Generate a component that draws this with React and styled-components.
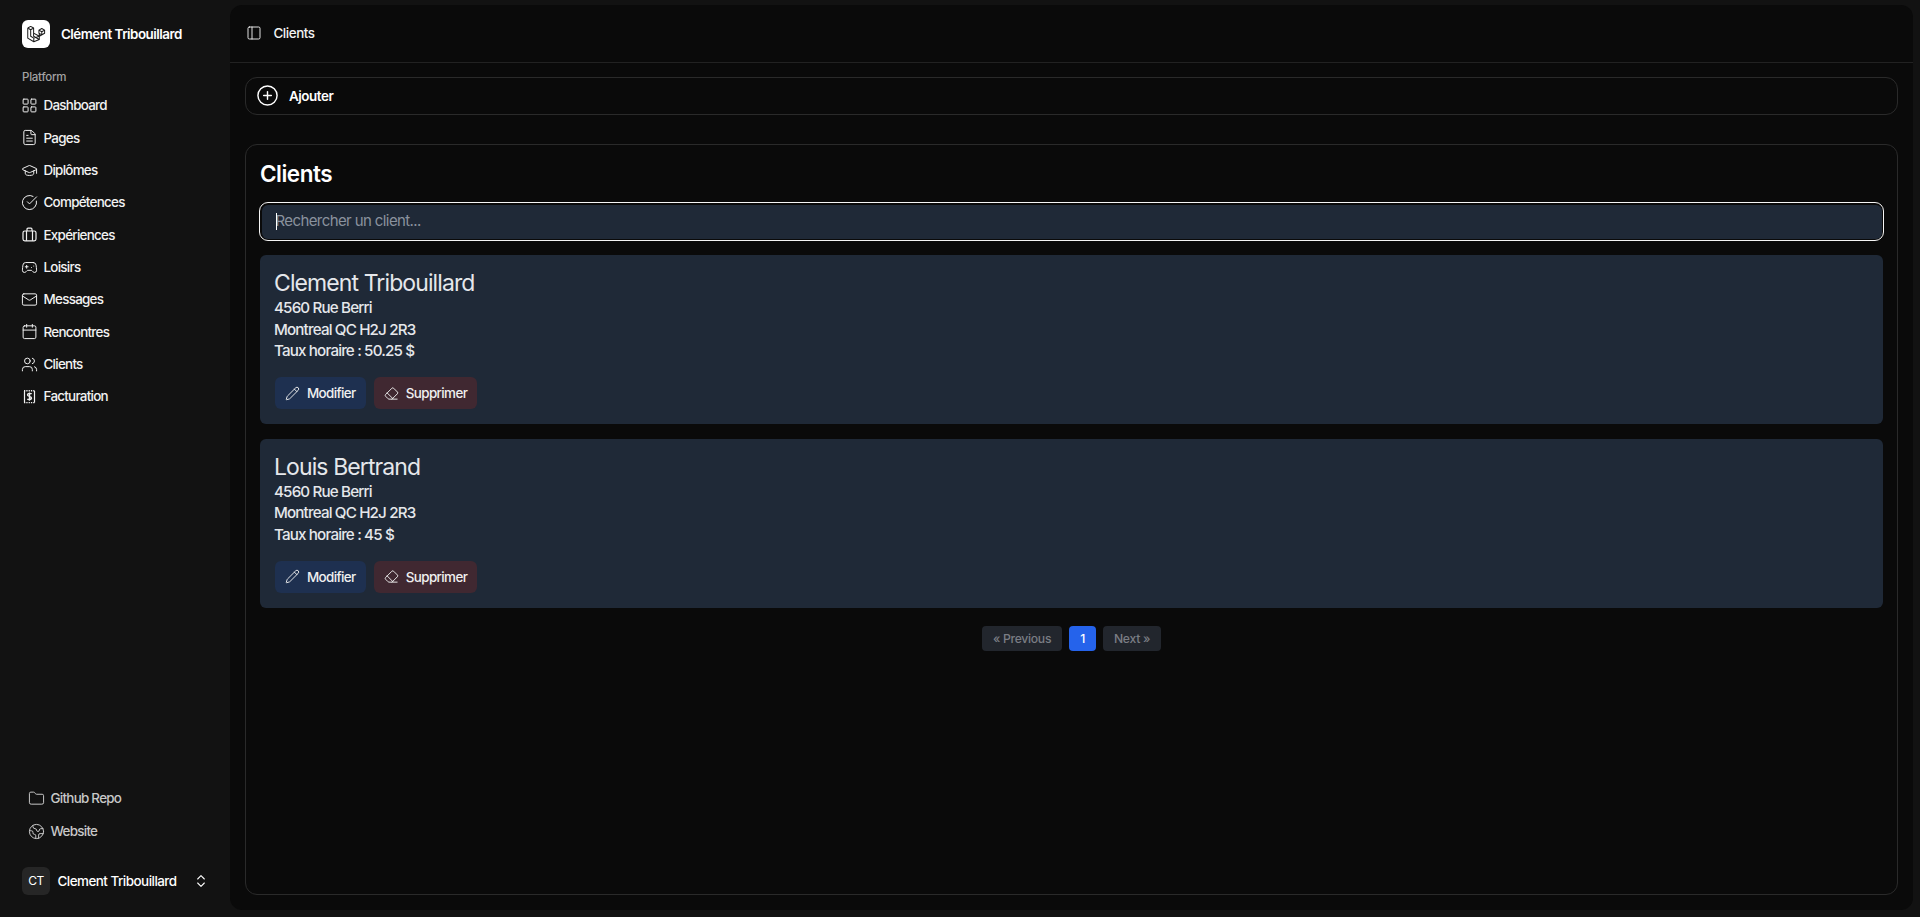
import React from 'react';
import styled, { createGlobalStyle } from 'styled-components';
import {
  LayoutGrid, FileText, GraduationCap, CircleCheckBig, Gamepad2, Mail, Calendar, Users,
  Folder, Earth, ChevronsUpDown, Pencil, Eraser, CirclePlus, PanelLeft,
} from 'lucide-react';

const Global = createGlobalStyle`
  * { box-sizing: border-box; }
  html, body { margin: 0; height: 100%; background: #121212; }
  body { font-family: Inter, "Liberation Sans", sans-serif; color: #fff; }
`;

const Shell = styled.div`
  display: flex;
  height: 917px;
  overflow: hidden;
`;
const Sidebar = styled.aside`
  width: 230px;
  flex: none;
  display: flex;
  flex-direction: column;
  padding: 20px 21px 22px 22px;
`;
const Brand = styled.div`
  display: flex;
  align-items: center;
  gap: 11px;
  height: 28px;
  font-size: 13.4px;
  font-weight: 600;
  letter-spacing: -0.5px;
`;
const LogoBox = styled.div`
  width: 28px;
  height: 28px;
  border-radius: 6px;
  background: #fff;
  display: flex;
  align-items: center;
  justify-content: center;
`;
const GroupLabel = styled.div`
  margin-top: 21px;
  height: 16px;
  line-height: 16px;
  font-size: 11.5px;
  font-weight: 500;
  letter-spacing: -0.25px;
  color: #a3a3a3;
`;
const Nav = styled.nav`
  margin-top: 4.4px;
  display: flex;
  flex-direction: column;
  gap: 0.33px;
`;
const NavItem = styled.a`
  display: flex;
  align-items: center;
  gap: 5.5px;
  height: 32px;
  margin-left: -1px;
  font-size: 13.4px;
  font-weight: 500;
  letter-spacing: -0.72px;
  color: #f2f2f2;
`;
const FootNav = styled.div`
  margin-top: auto;
  padding-left: 7px;
  display: flex;
  flex-direction: column;
  gap: 1px;
`;
const FootItem = styled(NavItem)`
  color: #c8c8c8;
`;
const UserRow = styled.div`
  margin-top: 20px;
  display: flex;
  align-items: center;
  height: 28px;
  font-size: 13.4px;
  font-weight: 500;
  letter-spacing: -0.5px;
`;
const Avatar = styled.div`
  width: 28px;
  height: 28px;
  flex: none;
  border-radius: 6px;
  background: #262626;
  display: flex;
  align-items: center;
  justify-content: center;
  padding-bottom: 2px;
  font-size: 12px;
  font-weight: 400;
  margin-right: 7.5px;
`;
const UserName = styled.span`
  flex: 1;
`;
const Main = styled.main`
  width: 1683px;
  flex: none;
  margin: 5px 0 7px;
  border-radius: 12px;
  background: #0a0a0a;
  display: flex;
  flex-direction: column;
`;
const TopBar = styled.header`
  height: 58px;
  flex: none;
  display: flex;
  align-items: center;
  gap: 11.5px;
  padding: 0 0 2px 16px;
  border-bottom: 1px solid #222;
  font-size: 13.4px;
  font-weight: 500;
  letter-spacing: -0.45px;
  color: #f2f2f2;
`;
const Content = styled.div`
  flex: 1;
  display: flex;
  flex-direction: column;
  padding: 14px 15px 15px;
  gap: 29px;
`;
const AddBar = styled.div`
  height: 38px;
  flex: none;
  display: flex;
  align-items: center;
  gap: 10px;
  padding: 0 0 1px 10px;
  border: 1px solid #2a2a2a;
  border-radius: 12px;
  font-size: 13.4px;
  font-weight: 600;
  letter-spacing: -0.45px;
`;
const Panel = styled.section`
  flex: 1;
  border: 1px solid #2a2a2a;
  border-radius: 12px;
  padding: 14px 14px 0;
`;
const Title = styled.h1`
  margin: 0;
  height: 29px;
  line-height: 29px;
  font-size: 22.5px;
  font-weight: 600;
  letter-spacing: -0.5px;
`;
const SearchWrap = styled.div`
  position: relative;
  margin: 14px -1px 0;
  height: 39px;
  padding: 1.5px;
  border: 1.5px solid #f5f5f5;
  border-radius: 9px;
  background: #0a0a0a;
`;
const Search = styled.input`
  display: block;
  width: 100%;
  height: 100%;
  padding: 0 14px 2px;
  border: 0;
  outline: 0;
  border-radius: 6px;
  background: #1f2937;
  color: #fff;
  font-family: inherit;
  font-size: 15px;
  letter-spacing: -0.6px;
  &::placeholder {
    color: #8a929e;
    opacity: 1;
  }
`;
const Caret = styled.span`
  position: absolute;
  left: 15.5px;
  top: 9.5px;
  width: 1px;
  height: 17px;
  background: #fff;
`;
const Cards = styled.div`
  margin-top: 14px;
  display: flex;
  flex-direction: column;
  gap: 14.5px;
`;
const Card = styled.article`
  height: 169px;
  padding: 14.4px 14px 0;
  border-radius: 6px;
  background: #1f2937;
  color: #e5e7eb;
`;
const CardName = styled.h2`
  margin: 0;
  height: 28px;
  line-height: 28px;
  font-size: 23px;
  font-weight: 400;
  letter-spacing: -0.9px;
`;
const CardLine = styled.div`
  height: 21.5px;
  line-height: 21.5px;
  font-size: 15.2px;
  font-weight: 500;
  letter-spacing: -0.85px;
`;
const Actions = styled.div`
  margin-top: 15.5px;
  padding-left: 1px;
  display: flex;
  gap: 8px;
`;
const ActionBtn = styled.button`
  height: 32px;
  display: flex;
  align-items: center;
  gap: 7px;
  padding: 0 10px;
  border: 0;
  border-radius: 6px;
  background: ${p => (p.$danger ? '#402831' : '#1e3050')};
  color: #f0f0f0;
  font-family: inherit;
  font-size: 13.4px;
  font-weight: 500;
  letter-spacing: -0.6px;
`;
const Pager = styled.div`
  margin-top: 18px;
  display: flex;
  justify-content: center;
  gap: 7px;
`;
const PageBtn = styled.span`
  height: 25px;
  display: flex;
  align-items: center;
  padding: 0 11px;
  border-radius: 4px;
  background: ${p => (p.$active ? '#2563eb' : '#22262d')};
  color: ${p => (p.$active ? '#fff' : '#7a7d84')};
  font-size: 12.2px;
  font-weight: 500;
  letter-spacing: -0.3px;
`;

const Laravel = () => (
  <svg width="22" height="22" viewBox="0 0 24 24" fill="none" stroke="#1a1a1a" strokeWidth="1.1" strokeLinejoin="round">
    <path d="M3 5.5 6.2 3.7 9.4 5.5V14.5L15.6 18 15.6 14.5 9.4 11M3 5.5V16.5L9.6 20.5 15.6 18M3 5.5 6.2 7.3 9.4 5.5M6.2 7.3V14.5L9.6 16.5 15.6 14.5 21.4 11.2V7.8L18.3 6 15.2 7.8V11.2L18.3 13 21.4 11.2M15.2 7.8 18.3 9.6 21.4 7.8M18.3 9.6V13M9.6 16.5V20.5M15.6 14.5V11" />
  </svg>
);
const BriefcaseIcon = () => (
  <svg width="17" height="17" viewBox="0 0 17 17" fill="none" stroke="currentColor" strokeWidth="1.2">
    <rect x="2" y="5" width="13" height="9.8" rx="1.8" />
    <path d="M6 5V3.2A1 1 0 0 1 7 2.2H10A1 1 0 0 1 11 3.2V5M5.5 5V14.8M11.5 5V14.8" />
  </svg>
);
const ReceiptIcon = () => (
  <svg width="17" height="17" viewBox="0 0 17 17" fill="none" stroke="currentColor" strokeWidth="1.2">
    <path d="M3.5 3V14.5M13.5 3V14.5" />
    <path d="M3 2.8H14M3 14.6H14" strokeDasharray="1.3 1" strokeWidth="1.4" />
    <path d="M10.6 6C10 5.2 6.7 5 6.5 6.8 6.3 8.6 10.6 8.2 10.5 10.2 10.3 12 7 11.7 6.3 11M8.5 4.4V12.8" strokeWidth="1.4" />
  </svg>
);

const icon = { size: 17, strokeWidth: 1.4 };
const items = [
  ['Dashboard', <LayoutGrid {...icon} />],
  ['Pages', <FileText {...icon} />],
  ['Diplômes', <GraduationCap {...icon} />],
  ['Compétences', <CircleCheckBig {...icon} />],
  ['Expériences', <BriefcaseIcon />],
  ['Loisirs', <Gamepad2 {...icon} />],
  ['Messages', <Mail {...icon} />],
  ['Rencontres', <Calendar {...icon} />],
  ['Clients', <Users {...icon} />],
  ['Facturation', <ReceiptIcon />],
];
const clients = [
  { name: 'Clement Tribouillard', rate: '50.25' },
  { name: 'Louis Bertrand', rate: '45' },
];

export default function App() {
  return (
    <Shell>
      <Global />
      <Sidebar>
        <Brand>
          <LogoBox><Laravel /></LogoBox>
          Clément Tribouillard
        </Brand>
        <GroupLabel>Platform</GroupLabel>
        <Nav>
          {items.map(([label, ic]) => (
            <NavItem key={label}>{ic}{label}</NavItem>
          ))}
        </Nav>
        <FootNav>
          <FootItem><Folder {...icon} />Github Repo</FootItem>
          <FootItem><Earth {...icon} />Website</FootItem>
        </FootNav>
        <UserRow>
          <Avatar>CT</Avatar>
          <UserName>Clement Tribouillard</UserName>
          <ChevronsUpDown size={16} strokeWidth={1.6} />
        </UserRow>
      </Sidebar>
      <Main>
        <TopBar>
          <PanelLeft size={16} strokeWidth={1.4} />
          Clients
        </TopBar>
        <Content>
          <AddBar>
            <CirclePlus size={23} strokeWidth={1.5} />
            Ajouter
          </AddBar>
          <Panel>
            <Title>Clients</Title>
            <SearchWrap>
              <Search placeholder="Rechercher un client..." />
              <Caret />
            </SearchWrap>
            <Cards>
              {clients.map(c => (
                <Card key={c.name}>
                  <CardName>{c.name}</CardName>
                  <CardLine>4560 Rue Berri</CardLine>
                  <CardLine>Montreal QC H2J 2R3</CardLine>
                  <CardLine>Taux horaire : {c.rate} $</CardLine>
                  <Actions>
                    <ActionBtn><Pencil size={15} strokeWidth={1.5} />Modifier</ActionBtn>
                    <ActionBtn $danger><Eraser size={15} strokeWidth={1.5} />Supprimer</ActionBtn>
                  </Actions>
                </Card>
              ))}
            </Cards>
            <Pager>
              <PageBtn>« Previous</PageBtn>
              <PageBtn $active>1</PageBtn>
              <PageBtn>Next »</PageBtn>
            </Pager>
          </Panel>
        </Content>
      </Main>
    </Shell>
  );
}
